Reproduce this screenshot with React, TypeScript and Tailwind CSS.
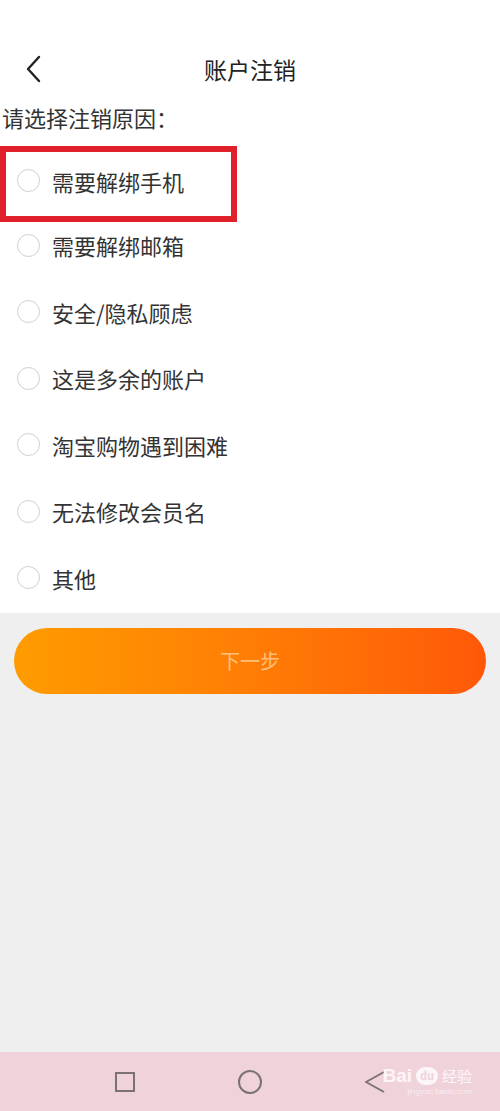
import React from "react";

const options = [
  "需要解绑手机",
  "需要解绑邮箱",
  "安全/隐私顾虑",
  "这是多余的账户",
  "淘宝购物遇到困难",
  "无法修改会员名",
  "其他",
];

export default function App() {
  return (
    <div
      className="w-[500px] h-[1111px] flex flex-col bg-[#efefef] overflow-hidden"
      style={{ fontFamily: '"Noto Sans CJK SC", "Noto Sans", sans-serif' }}
    >
      <div className="bg-white flex flex-col">
        <div className="h-[43px]" />
        <div className="relative h-[52px] flex items-center justify-center">
          <svg
            className="absolute left-[24px] top-[12px]"
            width="20"
            height="28"
            viewBox="0 0 20 28"
            fill="none"
            stroke="#222"
            strokeWidth="2.4"
            strokeLinecap="round"
            strokeLinejoin="round"
          >
            <path d="M15 2 L4 14 L15 26" />
          </svg>
          <span className="text-[23px] text-[#222] leading-none">账户注销</span>
        </div>
        <div className="pl-[2px] h-[44px] flex items-center text-[22px] text-[#333] leading-none">
          请选择注销原因：
        </div>
        <div className="flex flex-col">
          {options.map((o, i) => (
            <div
              key={o}
              className={
                i === 0
                  ? "h-[76px] w-[237px] border-[6px] border-[#e0202a] flex items-center pl-[11px] pb-[7px] mt-[7px]"
                  : i === 1
                  ? "h-[66.5px] flex items-center pl-[17px] -mt-[10px]"
                  : "h-[66.5px] flex items-center pl-[17px]"
              }
            >
              <span className="w-[23px] h-[23px] rounded-full border border-[#cfcfcf] bg-white shrink-0" />
              <span className="ml-[12px] text-[22px] text-[#333] leading-none">{o}</span>
            </div>
          ))}
        </div>
        <div className="h-[2px]" />
      </div>
      <div className="px-[14px] pt-[15px]">
        <div className="h-[66px] rounded-full bg-gradient-to-r from-[#ff9b00] via-[#ff7d05] to-[#ff5808] flex items-center justify-center">
          <span className="text-[20px] text-[#ffc07e] leading-none">下一步</span>
        </div>
      </div>
      <div className="flex-1" />
      <div className="relative h-[59px] bg-[#f0d2da] flex items-center">
        <div className="flex items-center pl-[62px]">
          <div className="w-[125px] flex justify-center">
            <span className="w-[20px] h-[20px] border-2 border-[#7a7275]" />
          </div>
          <div className="w-[125px] flex justify-center">
            <span className="w-[24px] h-[24px] rounded-full border-2 border-[#7a7275]" />
          </div>
          <div className="w-[125px] flex justify-center">
            <svg width="20" height="24" viewBox="0 0 20 24" fill="none" stroke="#7a7275" strokeWidth="2" strokeLinejoin="round">
              <path d="M19 2 L1 12 L19 22" />
            </svg>
          </div>
        </div>
        <div className="absolute right-[28px] top-[14px] flex flex-col items-end leading-none">
          <div className="flex items-center gap-[4px]">
            <span className="text-[19px] font-bold text-white/80" style={{ fontFamily: '"Liberation Sans", sans-serif' }}>Bai</span>
            <span className="w-[22px] h-[18px] rounded-full bg-white/80 text-[11px] text-[#f0d2da] flex items-center justify-center font-bold">du</span>
            <span className="text-[15px] text-white/80">经验</span>
          </div>
          <span className="text-[8px] text-white/60 mt-[3px]" style={{ fontFamily: '"Liberation Sans", sans-serif' }}>jingyan.baidu.com</span>
        </div>
      </div>
    </div>
  );
}
